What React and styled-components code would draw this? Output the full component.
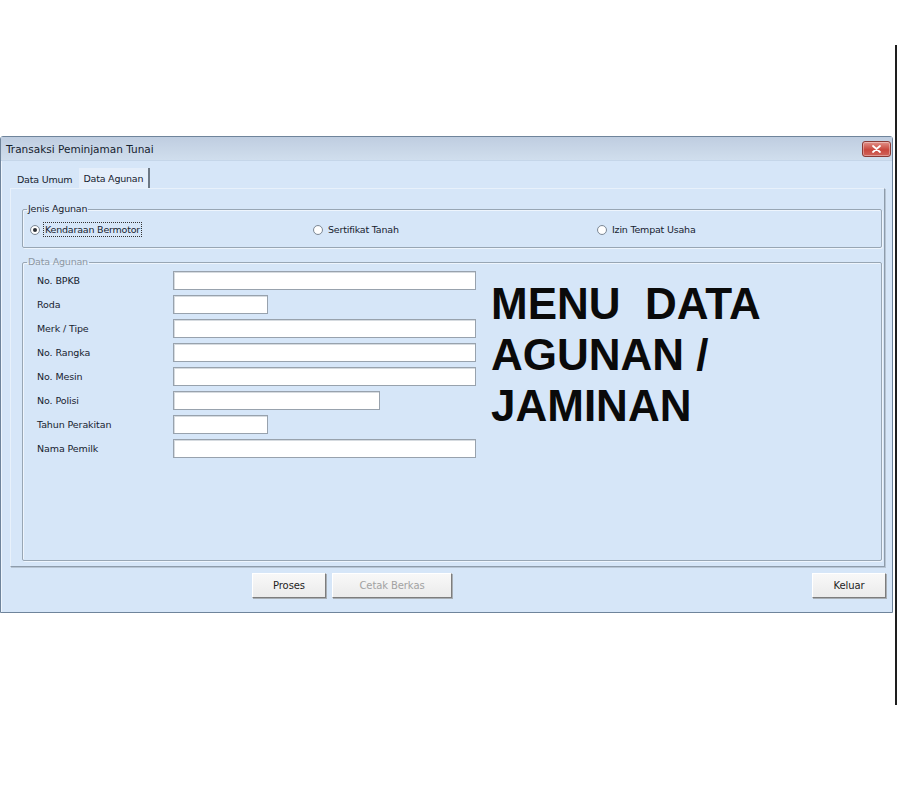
import React from 'react';
import styled, { createGlobalStyle } from 'styled-components';

const GlobalStyle = createGlobalStyle`
  *, *::before, *::after {
    box-sizing: border-box;
  }
  html, body {
    margin: 0;
    padding: 0;
    background: #ffffff;
  }
  body {
    font-family: "DejaVu Sans", Verdana, sans-serif;
  }
`;

const Page = styled.div`
  width: 897px;
  height: 800px;
  display: flex;
  align-items: flex-start;
  overflow: hidden;
`;

const Stage = styled.div`
  width: 895px;
  padding-top: 136px;
`;

const EdgeLine = styled.div`
  width: 2px;
  height: 660px;
  margin-top: 45px;
  background: #1e1e1e;
`;

const Window = styled.div`
  width: 893px;
  height: 477px;
  display: flex;
  flex-direction: column;
  background: #d6e6f8;
  border: 1px solid #6f849b;
  border-radius: 3px 3px 0 0;
  box-shadow: inset 1px 0 0 #eef5fd;
`;

const TitleBar = styled.div`
  height: 24px;
  display: flex;
  align-items: center;
  justify-content: space-between;
  padding: 0 1px 0 5px;
  background: linear-gradient(#bfcde0, #d0deed);
  border-bottom: 1px solid #c5d6e9;
`;

const Title = styled.span`
  font-size: 10.5px;
  color: #16222f;
`;

const CloseButton = styled.div`
  width: 29px;
  height: 16px;
  display: flex;
  align-items: center;
  justify-content: center;
  border-radius: 3px;
  border: 1px solid #8a3a35;
  background: linear-gradient(#e2928a, #c9473d 55%, #d0645a);
  box-shadow: inset 0 0 0 1px rgba(255, 255, 255, 0.35);
`;

const Body = styled.div`
  flex: 1;
  display: flex;
  flex-direction: column;
  padding: 7px 0 0 9px;
`;

const TabStrip = styled.div`
  height: 20px;
  display: flex;
  align-items: flex-end;
  padding-left: 3px;
`;

const Tab = styled.div`
  height: ${p => (p.active ? '20px' : '18px')};
  display: flex;
  align-items: center;
  padding: 0 5px 0 4px;
  margin-right: 2px;
  font-size: 9.5px;
  color: #16222f;
  background: ${p => (p.active ? '#e4eefa' : 'transparent')};
  border-right: ${p => (p.active ? '2px solid #6d7884' : '0')};
  letter-spacing: -0.2px;
`;

const TabPanel = styled.div`
  height: 379px;
  margin-right: 7px;
  display: flex;
  flex-direction: column;
  gap: 8px;
  padding: 14px 2px 5px 11px;
  border: 1px solid;
  border-color: #e8f1fb #8e9cab #8e9cab #e8f1fb;
  box-shadow: 1px 1px 0 #b7c5d4;
`;

const Group = styled.fieldset`
  margin: 0;
  padding: 0;
  min-width: 0;
  border: 1px solid #98a6b4;
  box-shadow: inset 1px 1px 0 #eef5fd, 1px 1px 0 #eef5fd;
  border-radius: 2px;
`;

const Legend = styled.legend`
  margin-left: 4px;
  padding: 0 1px;
  font-size: 9.5px;
  line-height: 12px;
  letter-spacing: -0.2px;
  color: ${p => (p.muted ? '#8d97a2' : '#16222f')};
`;

const RadioRow = styled.div`
  display: grid;
  grid-template-columns: 283px 284px 1fr;
  align-items: center;
  height: 32px;
  padding: 8px 0 12px 7px;
`;

const RadioItem = styled.label`
  display: flex;
  align-items: center;
  gap: 4px;
  font-size: 9.5px;
  color: #16222f;
  letter-spacing: -0.2px;
`;

const RadioCircle = styled.span`
  width: 10px;
  height: 10px;
  border-radius: 50%;
  border: 1px solid #7f8a96;
  background: radial-gradient(circle, #ffffff 55%, #dfe4ea);
  display: flex;
  align-items: center;
  justify-content: center;

  &::after {
    content: '';
    width: 4px;
    height: 4px;
    border-radius: 50%;
    background: ${p => (p.checked ? '#2b2f35' : 'transparent')};
  }
`;

const RadioText = styled.span`
  padding: 0 1px;
  line-height: 13px;
  outline: ${p => (p.focused ? '1px dotted #333' : 'none')};
`;

const DataGroup = styled(Group)`
  flex: 1;
`;

const DataContent = styled.div`
  display: flex;
  gap: 15px;
  padding: 3px 0 0 14px;
`;

const Form = styled.div`
  display: flex;
  flex-direction: column;
  gap: 5px;
`;

const Row = styled.div`
  display: flex;
  align-items: center;
  height: 19px;
`;

const Label = styled.span`
  width: 136px;
  font-size: 9.5px;
  color: #16222f;
  letter-spacing: -0.1px;
`;

const Input = styled.div`
  width: ${p => p.w}px;
  height: 19px;
  background: #ffffff;
  border: 1px solid #98a2ad;
  box-shadow: inset 1px 1px 0 #d6dbe0;
`;

const BigText = styled.div`
  padding-top: 7px;
  font-family: "Liberation Sans", Arial, sans-serif;
  font-weight: 700;
  font-size: 44px;
  line-height: 51px;
  color: #0a0a0a;
  white-space: pre;
`;

const Footer = styled.div`
  flex: 1;
  display: flex;
  align-items: flex-start;
  gap: 6px;
  padding: 6px 6px 0 242px;
`;

const Button = styled.div`
  width: ${p => p.w}px;
  height: 25px;
  display: flex;
  align-items: center;
  justify-content: center;
  font-size: 10px;
  letter-spacing: -0.1px;
  color: ${p => (p.disabled ? '#a2a2a2' : '#1e1e1e')};
  background: linear-gradient(#f8f8f8, #ebebeb);
  border: 1px solid;
  border-color: #ffffff #7d7d7d #7d7d7d #ffffff;
  box-shadow: 1px 1px 0 #a8aeb4;
  margin-left: ${p => (p.push ? 'auto' : '0')};
`;

const fields = [
  { label: 'No. BPKB', w: 303 },
  { label: 'Roda', w: 95 },
  { label: 'Merk / Tipe', w: 303 },
  { label: 'No. Rangka', w: 303 },
  { label: 'No. Mesin', w: 303 },
  { label: 'No. Polisi', w: 207 },
  { label: 'Tahun Perakitan', w: 95 },
  { label: 'Nama Pemilk', w: 303 },
];

const CloseIcon = () => (
  <svg width="9" height="8" viewBox="0 0 9 8">
    <path d="M1 1 L8 7 M8 1 L1 7" stroke="#ffffff" strokeWidth="1.8" strokeLinecap="round" />
  </svg>
);

export default function App() {
  return (
    <>
      <GlobalStyle />
      <Page>
        <Stage>
          <Window>
            <TitleBar>
              <Title>Transaksi Peminjaman Tunai</Title>
              <CloseButton>
                <CloseIcon />
              </CloseButton>
            </TitleBar>
            <Body>
              <TabStrip>
                <Tab>Data Umum</Tab>
                <Tab active>Data Agunan</Tab>
              </TabStrip>
              <TabPanel>
                <Group>
                  <Legend>Jenis Agunan</Legend>
                  <RadioRow>
                    <RadioItem>
                      <RadioCircle checked />
                      <RadioText focused>Kendaraan Bermotor</RadioText>
                    </RadioItem>
                    <RadioItem>
                      <RadioCircle />
                      <RadioText>Sertifikat Tanah</RadioText>
                    </RadioItem>
                    <RadioItem>
                      <RadioCircle />
                      <RadioText>Izin Tempat Usaha</RadioText>
                    </RadioItem>
                  </RadioRow>
                </Group>
                <DataGroup>
                  <Legend muted>Data Agunan</Legend>
                  <DataContent>
                    <Form>
                      {fields.map(f => (
                        <Row key={f.label}>
                          <Label>{f.label}</Label>
                          <Input w={f.w} />
                        </Row>
                      ))}
                    </Form>
                    <BigText>{'MENU  DATA\nAGUNAN /\nJAMINAN'}</BigText>
                  </DataContent>
                </DataGroup>
              </TabPanel>
              <Footer>
                <Button w={74}>Proses</Button>
                <Button w={120} disabled>Cetak Berkas</Button>
                <Button w={74} push>Keluar</Button>
              </Footer>
            </Body>
          </Window>
        </Stage>
        <EdgeLine />
      </Page>
    </>
  );
}
